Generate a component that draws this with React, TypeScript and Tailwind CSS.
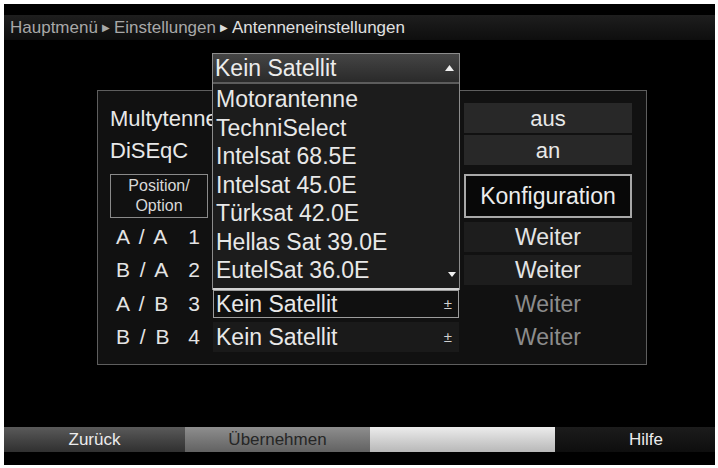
import React from "react";

const font = { fontFamily: '"Liberation Sans", Arial, sans-serif' };

const satellites = [
  "Motorantenne",
  "TechniSelect",
  "Intelsat 68.5E",
  "Intelsat 45.0E",
  "Türksat 42.0E",
  "Hellas Sat 39.0E",
  "EutelSat 36.0E",
];

function PosLabel({ pos, num }: { pos: string; num: string }) {
  return (
    <div className="flex h-full items-center justify-between pl-[6px] pr-[8px] text-[21px] text-[#e4e4e4]">
      <span className="whitespace-pre tracking-[2px]">{pos}</span>
      <span>{num}</span>
    </div>
  );
}

export default function App() {
  return (
    <div className="h-[468px] w-[718px] bg-white pb-[3px] pl-[4px] pr-[3px] pt-[4px]" style={font}>
      <div className="flex h-full flex-col bg-black">
        {/* breadcrumb */}
        <div className="mt-[11px] flex h-[25px] items-center bg-gradient-to-b from-[#1e1e1e] to-[#0e0e0e] pl-[6px] text-[17px]">
          <span className="text-[#a8a8a8]">Hauptmenü</span>
          <span className="mx-[4px] text-[10px] text-[#a8a8a8]">▶</span>
          <span className="text-[#a8a8a8]">Einstellungen</span>
          <span className="mx-[4px] text-[10px] text-[#dcdcdc]">▶</span>
          <span className="text-[#e0e0e0]">Antenneneinstellungen</span>
        </div>

        <div className="flex-1">
          <div className="relative ml-[93px] mt-[50px] h-[275px] w-[550px] border border-[#5e5e5e] bg-[#111111] pl-[12px] pt-[12px]">
            <div className="grid grid-cols-[98px_246px_168px] gap-x-[5px]">
              {/* row 1 */}
              <div className="col-span-2 flex h-[30px] items-center whitespace-nowrap text-[22px] text-[#e8e8e8]">
                Multytenne
              </div>
              <div className="flex h-[30px] items-center justify-center bg-[#282828] text-[22px] text-[#e8e8e8]">aus</div>

              {/* row 2 */}
              <div className="col-span-2 mt-[2px] flex h-[30px] items-center text-[22px] text-[#e8e8e8]">DiSEqC</div>
              <div className="mt-[2px] flex h-[30px] items-center justify-center bg-[#282828] text-[22px] text-[#e8e8e8]">an</div>

              {/* row 3 */}
              <div className="mt-[9px] flex h-[44px] flex-col items-center justify-center border-[1.5px] border-[#8a8a8a] text-[16px] leading-[20px] text-[#d8d8d8]">
                <span>Position/</span>
                <span>Option</span>
              </div>
              <div className="mt-[9px]" />
              <div className="mt-[9px] flex h-[44px] items-center justify-center border-2 border-[#a8a8a8] bg-[#080808] text-[23px] text-[#ececec]">
                Konfiguration
              </div>

              {/* row 4 */}
              <div className="mt-[4px] h-[30px]">
                <PosLabel pos="A / A" num="1" />
              </div>
              <div className="mt-[4px]" />
              <div className="mt-[4px] flex h-[30px] items-center justify-center bg-[#1d1d1d] text-[23px] text-[#e4e4e4]">Weiter</div>

              {/* row 5 */}
              <div className="mt-[3px] h-[30px]">
                <PosLabel pos="B / A" num="2" />
              </div>
              <div className="mt-[3px]" />
              <div className="mt-[3px] flex h-[30px] items-center justify-center bg-[#1d1d1d] text-[23px] text-[#e4e4e4]">Weiter</div>

              {/* row 6 */}
              <div className="mt-[5px] h-[28px]">
                <PosLabel pos="A / B" num="3" />
              </div>
              <div className="mt-[5px] flex h-[28px] items-center justify-between border-[1.5px] border-[#9c9c9c] bg-[#101010] pl-[2px] pr-[6px] text-[23px] text-[#e8e8e8]">
                <span>Kein Satellit</span>
                <span className="text-[15px] text-[#cfcfcf]">±</span>
              </div>
              <div className="mt-[5px] flex h-[28px] items-center justify-center text-[23px] text-[#8c8c8c]">Weiter</div>

              {/* row 7 */}
              <div className="mt-[4px] h-[30px]">
                <PosLabel pos="B / B" num="4" />
              </div>
              <div className="mt-[4px] flex h-[30px] items-center justify-between bg-[#1a1a1a] pl-[3px] pr-[7px] text-[23px] text-[#e8e8e8]">
                <span>Kein Satellit</span>
                <span className="text-[15px] text-[#cfcfcf]">±</span>
              </div>
              <div className="mt-[4px] flex h-[30px] items-center justify-center text-[23px] text-[#8c8c8c]">Weiter</div>
            </div>

            {/* open dropdown list */}
            <div className="absolute left-[114px] top-[-38px] z-10 flex h-[237px] w-[248px] flex-col border-x-[1.5px] border-t-[1.5px] border-[#8c8c8c] bg-[#1c1c1c]">
              <div className="flex h-[30px] items-center justify-between border-b-2 border-[#5c5c5c] bg-gradient-to-b from-[#454545] to-[#2a2a2a] pl-[2px] pr-[5px] text-[23px] text-[#ececec]">
                <span>Kein Satellit</span>
                <svg width="9" height="6" viewBox="0 0 9 6">
                  <path d="M0 6 L4.5 0 L9 6 Z" fill="#f0f0f0" />
                </svg>
              </div>
              <div className="relative flex flex-1 flex-col pt-[1px]">
                {satellites.map((s) => (
                  <div key={s} className="flex h-[28.5px] items-center pl-[3px] text-[23px] text-[#e8e8e8]">
                    {s}
                  </div>
                ))}
                <svg className="absolute bottom-[11px] right-[3px]" width="8" height="5" viewBox="0 0 8 5">
                  <path d="M0 0 L8 0 L4 5 Z" fill="#f0f0f0" />
                </svg>
              </div>
              <div className="h-[2px] bg-[#d4d4d4]" />
            </div>
          </div>
        </div>

        {/* footer */}
        <div className="mb-[13px] flex h-[25px] text-[17px]">
          <div className="flex w-[181px] items-center justify-center bg-gradient-to-b from-[#5a5a5a] to-[#303030] text-[#ececec]">
            Zurück
          </div>
          <div className="flex w-[185px] items-center justify-center bg-gradient-to-b from-[#8e8e8e] to-[#626262] text-[#262626]">
            Übernehmen
          </div>
          <div className="w-[185px] bg-gradient-to-b from-[#ececec] to-[#b8b8b8]" />
          <div className="flex flex-1 items-center justify-end bg-gradient-to-b from-[#1c1c1c] to-[#0e0e0e] pr-[52px] text-[#ececec]">
            Hilfe
          </div>
        </div>
      </div>
    </div>
  );
}
